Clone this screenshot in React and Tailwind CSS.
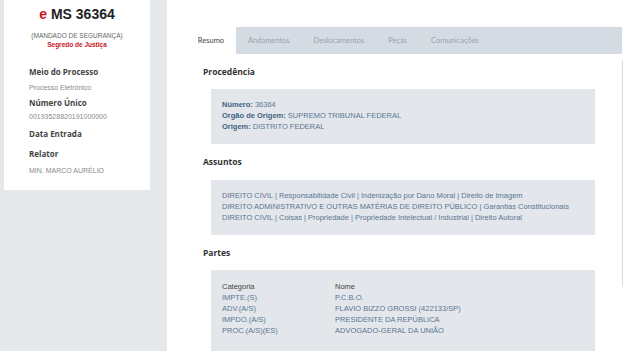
import React from "react";

const arial = { fontFamily: '"Liberation Sans", Arial, sans-serif' };
const open = { fontFamily: '"Open Sans", "Noto Sans", sans-serif' };
const lato = { fontFamily: 'Lato, "Open Sans", sans-serif' };

function Heading({ children }) {
  return (
    <div className="text-[8.5px] leading-[12px] font-bold text-[#333]" style={open}>
      {children}
    </div>
  );
}

export default function App() {
  const partes = [
    ["IMPTE.(S)", "P.C.B.O."],
    ["ADV.(A/S)", "FLAVIO BIZZO GROSSI (422133/SP)"],
    ["IMPDO.(A/S)", "PRESIDENTE DA REPÚBLICA"],
    ["PROC.(A/S)(ES)", "ADVOGADO-GERAL DA UNIÃO"],
  ];
  return (
    <div className="w-[624px] h-[351px] flex overflow-hidden bg-white">
      {/* Left column */}
      <div className="w-[167px] shrink-0 bg-[#e5e8eb] pl-[4px]">
        <div className="w-[146px] h-[190px] bg-white flex flex-col">
          <div className="text-center pt-[6px] text-[14px] leading-[16px] font-bold text-[#222]" style={arial}>
            <span className="text-[#c8161d]">e</span> MS 36364
          </div>
          <div className="text-center mt-[9px] text-[6.5px] leading-[9px] text-[#666]" style={arial}>
            (MANDADO DE SEGURANÇA)
          </div>
          <div className="text-center text-[6.5px] leading-[9px] font-bold text-[#c8161d]" style={arial}>
            Segredo de Justiça
          </div>
          <div className="pl-[25px] mt-[17px]">
            <div className="text-[8px] leading-[12px] font-bold text-[#444]" style={open}>Meio do Processo</div>
            <div className="mt-[5px] text-[7px] leading-[10px] text-[#8a8a8a]" style={arial}>Processo Eletrônico</div>
            <div className="mt-[4px] text-[8px] leading-[12px] font-bold text-[#444]" style={open}>Número Único</div>
            <div className="mt-[3px] text-[7px] leading-[10px] text-[#8a8a8a]" style={arial}>00193528820191000000</div>
            <div className="mt-[6px] text-[8px] leading-[12px] font-bold text-[#444]" style={open}>Data Entrada</div>
            <div className="mt-[8px] text-[8px] leading-[12px] font-bold text-[#444]" style={open}>Relator</div>
            <div className="mt-[6px] text-[7px] leading-[10px] text-[#8a8a8a]" style={arial}>MIN. MARCO AURÉLIO</div>
          </div>
        </div>
      </div>

      {/* Right content */}
      <div className="flex-1 flex flex-col pt-[27px]">
        {/* Tabs */}
        <div className="flex shrink-0 h-[27px] ml-[19px] mr-[2px] text-[7.5px]" style={lato}>
          <div className="w-[50px] flex items-center justify-center bg-white text-[#444]">Resumo</div>
          <div className="flex-1 flex items-center bg-[#d4dbe2] pl-[12px] gap-[24px] text-[#9aa3ad]">
            <span>Andamentos</span>
            <span>Deslocamentos</span>
            <span>Peças</span>
            <span>Comunicações</span>
          </div>
        </div>

        <div className="flex shrink-0">
          <div className="flex-1 pl-[36px]">
            <div className="mt-[12px]">
              <Heading>Procedência</Heading>
            </div>
            <div className="mt-[11px] ml-[8px] w-[384px] h-[55px] bg-[#e3e7eb] pl-[11px] pt-[10px] text-[7.5px] leading-[11px] text-[#5a7693]" style={arial}>
              <div><b className="text-[#3f6384]">Número:</b> 36364</div>
              <div><b className="text-[#3f6384]">Orgão de Origem:</b> SUPREMO TRIBUNAL FEDERAL</div>
              <div><b className="text-[#3f6384]">Origem:</b> DISTRITO FEDERAL</div>
            </div>

            <div className="mt-[12px]">
              <Heading>Assuntos</Heading>
            </div>
            <div className="mt-[12px] ml-[8px] w-[384px] h-[55px] bg-[#e3e7eb] pl-[11px] pt-[10px] text-[7.5px] leading-[11px] text-[#5a7693]" style={arial}>
              <div>DIREITO CIVIL | Responsabilidade Civil | Indenização por Dano Moral | Direito de Imagem</div>
              <div>DIREITO ADMINISTRATIVO E OUTRAS MATÉRIAS DE DIREITO PÚBLICO | Garantias Constitucionais</div>
              <div>DIREITO CIVIL | Coisas | Propriedade | Propriedade Intelectual / Industrial | Direito Autoral</div>
            </div>

            <div className="mt-[12px]">
              <Heading>Partes</Heading>
            </div>
            <div className="mt-[11px] ml-[8px] w-[384px] h-[90px] bg-[#e3e7eb] pl-[11px] pt-[11px] text-[7.5px] leading-[11px] text-[#5a7693]" style={arial}>
              <div className="flex text-[#444]">
                <span className="w-[113px]">Categoria</span>
                <span>Nome</span>
              </div>
              {partes.map(([c, n]) => (
                <div key={c} className="flex">
                  <span className="w-[113px]">{c}</span>
                  <span>{n}</span>
                </div>
              ))}
            </div>
          </div>
          <div className="w-[1px] bg-[#d9dde1] mt-[6px] h-[227px] mr-[1px]" />
        </div>
      </div>
    </div>
  );
}
